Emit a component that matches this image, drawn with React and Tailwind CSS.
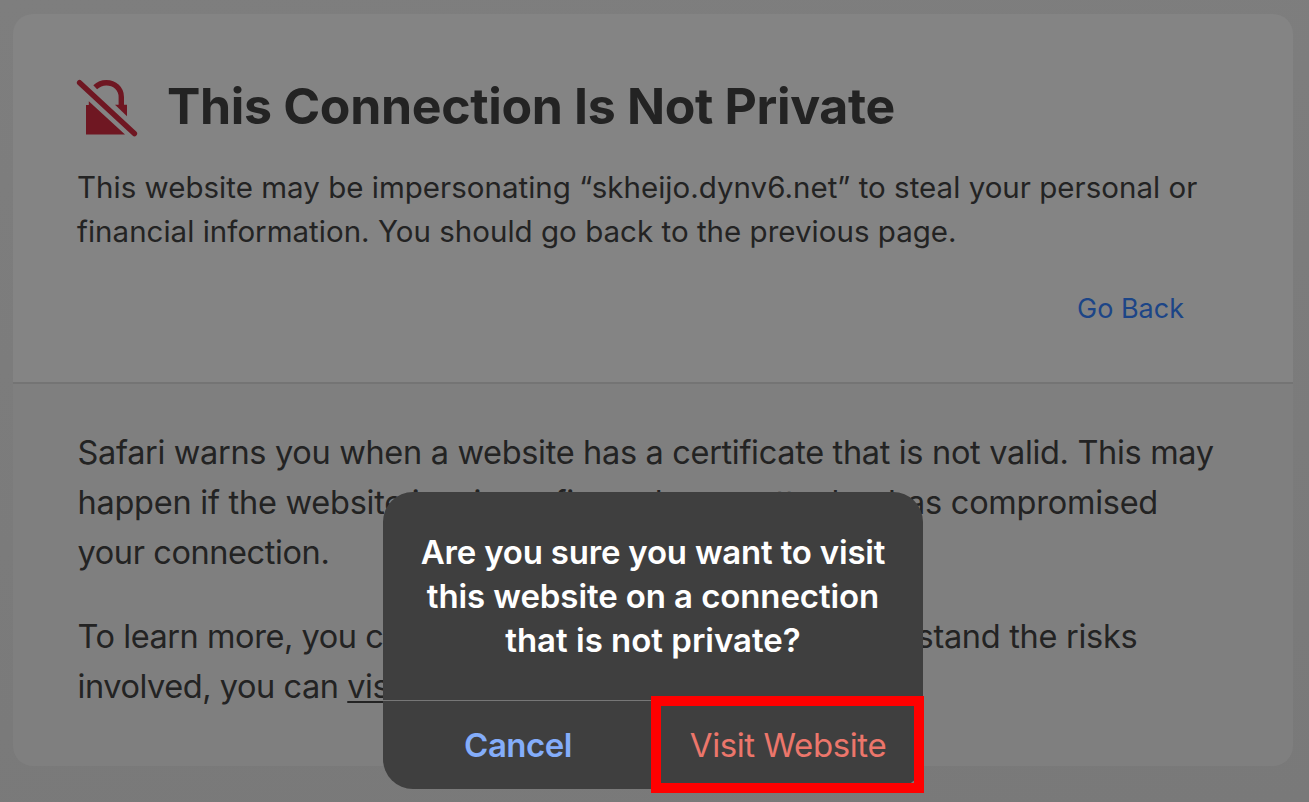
function WarningIcon() {
  return (
    <svg className="block h-[60px] w-[62px]" viewBox="76 78 62 60" fill="none">
      <path d="M86 105H88.8V101.3L125 134.6H86Z" fill="#6f1722" />
      <path d="M95.2 87.3C98.2 84.4 101.8 82.7 106.3 82.7C114.8 82.7 121.3 88.8 121.3 97V106" stroke="#6f1722" strokeWidth="5.4" />
      <path d="M115 104.8H127V116.3Z" fill="#6f1722" />
      <path d="M79.6 82.7L134.4 133.6" stroke="#6f1722" strokeWidth="5.4" strokeLinecap="round" />
    </svg>
  );
}

function Line({ className = "", children }) {
  return <span className={"block whitespace-nowrap " + className}>{children}</span>;
}

export default function App() {
  return (
    <main className="relative h-[802px] w-[1309px] overflow-hidden bg-[linear-gradient(175deg,#7e7e7e,#797979)] pl-[13px] pr-4 pt-3.5 font-['Inter',sans-serif] text-[#232323]">
      <article className="h-[752px] w-[1280px] overflow-hidden rounded-[20px]">
        <section className="h-[370px] border-b-2 border-[#747474] bg-[#848484] pl-16 pr-[109px] pt-16">
          <header className="flex h-[60px] gap-[29px]">
            <div className="-ml-px"><WarningIcon /></div>
            <h1 className="-mt-0.5 text-[50px] font-bold leading-[60px]">
              <Line className="tracking-[-0.34px]">This Connection Is Not Private</Line>
            </h1>
          </header>
          <p className="mt-[27px] text-[29.5px] leading-[44px] tracking-[0.02px]">
            <Line>This website may be impersonating “skheijo.dynv6.net” to steal your personal or</Line>
            <Line>financial information. You should go back to the previous page.</Line>
          </p>
          <div className="mt-[34px] flex justify-end text-[27px] leading-[44px] text-[#1c4587]">
            <a><Line>Go Back</Line></a>
          </div>
        </section>
        <section className="h-[382px] bg-[#7f7f7f] pl-[64.5px] pt-[44px] text-[32.5px] leading-[50px]">
          <p>
            <Line className="tracking-[-0.325px]">Safari warns you when a website has a certificate that is not valid. This may</Line>
            <Line className="tracking-[-0.25px]">happen if the website is misconfigured or an attacker has compromised</Line>
            <Line className="tracking-[-0.4px]">your connection.</Line>
          </p>
          <p className="mt-[34px]">
            <Line className="tracking-[-0.285px]">
              <span className="tracking-[-0.44px]">To learn more, you </span>
              can <span className="underline decoration-2 underline-offset-[3px]">view the certificate</span>. If you understand the risks
            </Line>
            <Line className="tracking-[-0.44px]">
              involved, you can <span className="underline decoration-2 underline-offset-[3px]">visit this website</span>.
            </Line>
          </p>
        </section>
      </article>
      <div role="dialog" className="absolute left-[383px] top-[492px] h-[297px] w-[540px] rounded-[30px] bg-[#3f3f3f] text-white">
        <h2 className="h-[208px] pt-[38px] text-center text-[33px] font-semibold leading-[44px]">
          <Line className="tracking-[-0.2px]">Are you sure you want to visit</Line>
          <Line className="tracking-[-0.1px]">this website on a connection</Line>
          <Line>that is not private?</Line>
        </h2>
        <div className="grid h-[89px] grid-cols-2 border-t border-[#777777] text-center text-[33px] leading-[88px]">
          <button className="font-semibold text-[#84adfa]"><Line className="tracking-[-0.5px]">Cancel</Line></button>
          <button className="text-[#ec766b]"><Line className="tracking-[-0.4px]">Visit Website</Line></button>
        </div>
      </div>
      <div className="absolute left-[651px] top-[696px] h-[97px] w-[273px] border-[10px] border-[#ff0000]" />
    </main>
  );
}
